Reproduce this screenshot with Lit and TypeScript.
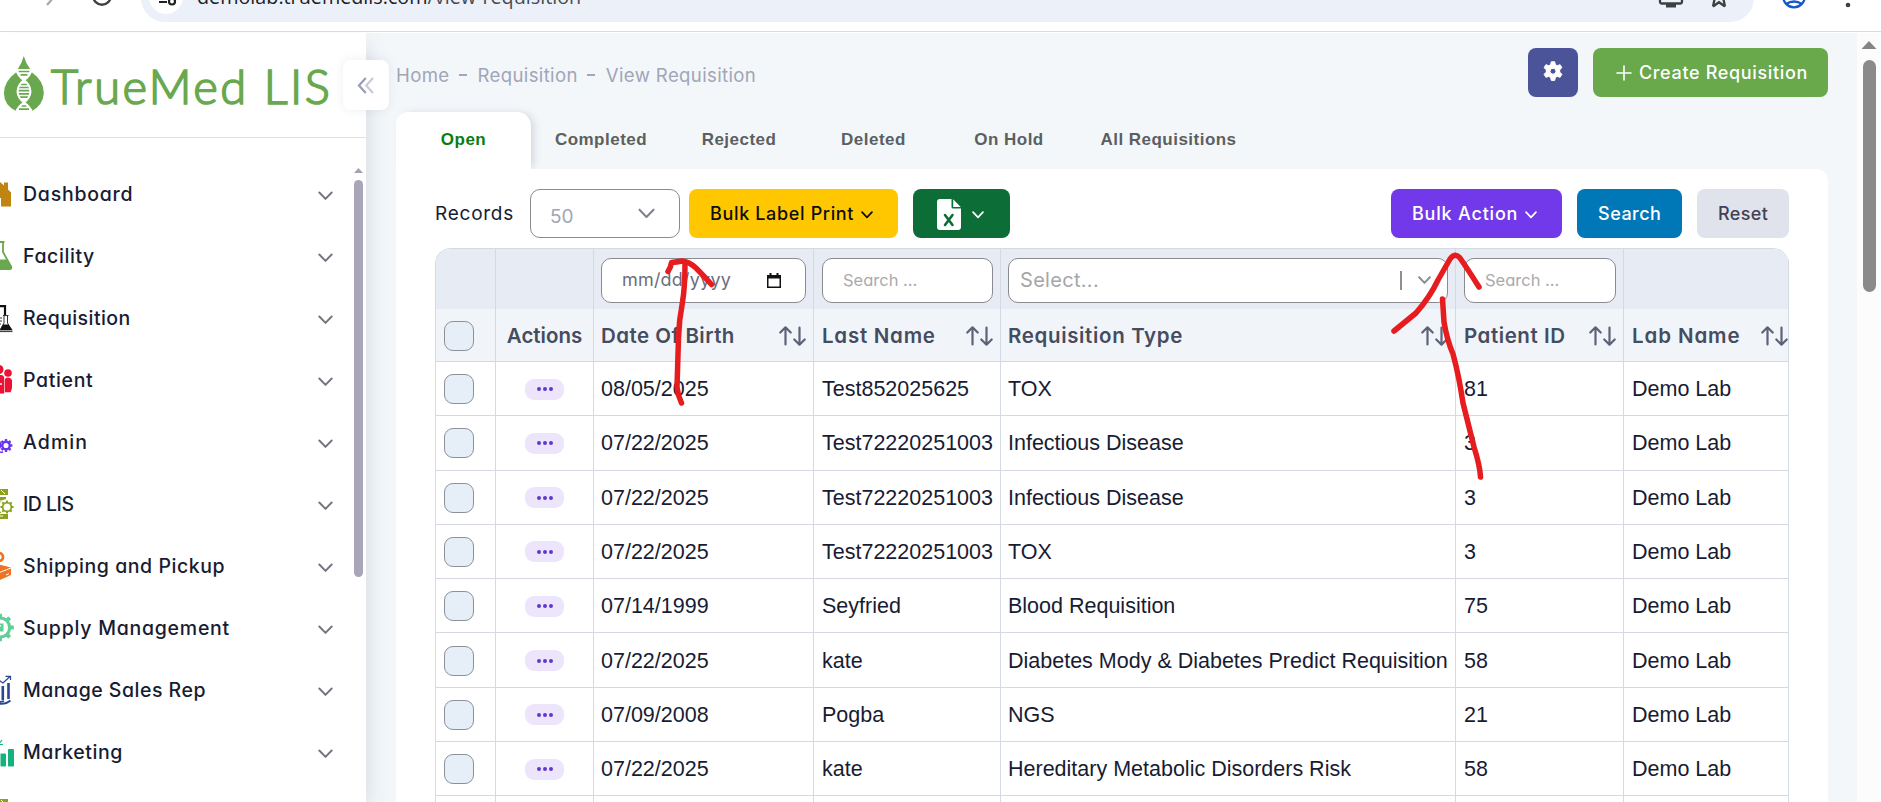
import { LitElement, html, css, svg } from 'lit';
import { customElement } from 'lit/decorators.js';

const chevron = (w = 14, sw = 2) => html`<svg class="chev" width=${w} height=${w * 0.64} viewBox="0 0 14 9" fill="none"
  stroke="currentColor" stroke-width=${sw} stroke-linecap="round" stroke-linejoin="round"><path d="M1.2 1.4 7 7.4l5.800-6"/></svg>`;

const teeth = (cx: number, cy: number, r: number, w: number, h: number, color: string) =>
  [0, 45, 90, 135, 180, 225, 270, 315].map(
    (a) => svg`<rect x=${cx - w / 2} y=${cy - r - h} width=${w} height=${h + 1} rx="0.6" fill=${color} transform="rotate(${a} ${cx} ${cy})"/>`
  );

const idLis = svg`<path fill="#8aa31f" d="M8 0h17v6H8zM8 8h15v16H8z"/><path stroke="#fff" stroke-width="1" d="M18 1l4 4M17 12h3M17 16h2"/>
  <circle cx="24" cy="18" r="8" fill="#fff"/><circle cx="24" cy="18" r="4.400" fill="none" stroke="#8aa31f" stroke-width="1.700"/>
  ${teeth(24, 18, 4.8, 2, 1.8, '#8aa31f')}<path fill="#8aa31f" d="M8 25h17v5H8z"/><path stroke="#fff" d="M8 27h12"/>`;

const NAV = [
  { label: 'Dashboard', track: 0.76, icon: svg`<path fill="#c08411" d="M2 15 16 2l5 4.500V3.400h4v7l3 3V27.500H18V19h-6v8.500H4V15z"/>` },
  { label: 'Facility', track: 0.6, icon: svg`<path fill="#6aa84f" d="M9 0h12.500v2H9z"/><path fill="none" stroke="#6aa84f" stroke-width="1.800" d="M11 1v9L2 26q0 2 2 2h22q3 0 2-2.500L20 11V1"/><path fill="#6aa84f" d="M6 18.500h18l5 7.500q.5 2.500-2 2.800H4z"/>` },
  { label: 'Requisition', track: 0.42, icon: svg`<path fill="none" stroke="#111" stroke-width="2.200" d="M12 3.200h10V12"/><path fill="none" stroke="#333" stroke-width="1" d="M15 15h4M15 18h4M15 21h3M20 12.500h5.500M21 13v7l-4 7M24.500 13v7l4 7"/><path fill="#111" d="M20 21.500h5.500l4 5.500H17z"/><path fill="#444" d="M12 27.500h17.500v1.600H12z"/>` },
  { label: 'Patient', track: 0.65, icon: svg`<g fill="#ee1133"><circle cx="16" cy="4.500" r="4.500"/><path d="M8 12q0-2 3-2h7q3 0 3.200 3v15.500H8z"/><circle cx="25" cy="8" r="3.800"/><path d="M21.800 15q.2-2.500 3.200-2.500t4 2.500v8l-1.300 4.200h-5.900z"/></g><path stroke="#fff" stroke-width="1.600" d="M13 19h6"/>` },
  { label: 'Admin', track: 1.1, icon: svg`<circle cx="23" cy="18.500" r="3.700" fill="none" stroke="#6a35ee" stroke-width="2.300"/>${teeth(23, 18.5, 4.4, 2.6, 2, '#6a35ee')}<circle cx="12" cy="18" r="5" fill="none" stroke="#6a35ee" stroke-width="3"/><path fill="none" stroke="#6a35ee" stroke-width="1.400" d="M16 24.500q2 1.500 4 .3"/>` },
  { label: 'ID LIS', track: -0.5, icon: idLis },
  { label: 'Shipping and Pickup', track: 0.55, icon: svg`<circle cx="16" cy="6" r="4" fill="none" stroke="#ee7322" stroke-width="2.800"/><path fill="#ee7322" d="M12 9h6l-2 5zM2 18l12-5 14 3.500V24l-13 6L2 25z"/><path fill="none" stroke="#fff" stroke-width="1" d="M15 22l13-5M23 24l3-1.300M14 21l3-2"/>` },
  { label: 'Supply Management', track: 0.75, icon: svg`<circle cx="17" cy="14.500" r="9.600" fill="none" stroke="#5fcf97" stroke-width="3"/>${teeth(17, 14.5, 10.6, 4, 3.2, '#5fcf97')}<path fill="#5fcf97" d="M12 10.500h8.500v8H12z"/><path fill="#fff" d="M15 12h3v1.500h-3z"/>` },
  { label: 'Manage Sales Rep', track: 0.5, icon: svg`<g fill="#2c4695"><path d="M18.500 11h2.600v14h-2.600zM24.200 8h2.600v16h-2.600zM12 15h3v10h-3z"/></g><path fill="none" stroke="#2c4695" stroke-width="1.200" d="M12 10.500 17 6l3 2 7-6.500M22.500 1.300H27.500V5"/><path fill="none" stroke="#2c4695" stroke-width="1.800" d="M12 27.500q9 3.500 15.500-2M12 25.500q4 2.500 9 .5"/>` },
  { label: 'Marketing', track: 0.55, icon: svg`<g fill="#14b27d"><rect x="17.500" y="16.500" width="5.500" height="13" rx="0.800"/><rect x="25" y="12" width="6" height="17.500" rx="0.800"/><rect x="10" y="20" width="5" height="9"/></g><path fill="none" stroke="#14b27d" stroke-width="1.200" d="M12 8q4-.5 7-5M15 7.500h5"/>` },
  { label: '', track: 0, icon: idLis },
];

const TABS = [
  { label: 'Open', w: 135 }, { label: 'Completed', w: 140 }, { label: 'Rejected', w: 136 },
  { label: 'Deleted', w: 133 }, { label: 'On Hold', w: 138 }, { label: 'All Requisitions', w: 181 },
];

const ROWS = [
  ['08/05/2025', 'Test852025625', 'TOX', '81'],
  ['07/22/2025', 'Test72220251003', 'Infectious Disease', '3'],
  ['07/22/2025', 'Test72220251003', 'Infectious Disease', '3'],
  ['07/22/2025', 'Test72220251003', 'TOX', '3'],
  ['07/14/1999', 'Seyfried', 'Blood Requisition', '75'],
  ['07/22/2025', 'kate', 'Diabetes Mody & Diabetes Predict Requisition', '58'],
  ['07/09/2008', 'Pogba', 'NGS', '21'],
  ['07/22/2025', 'kate', 'Hereditary Metabolic Disorders Risk', '58'],
];

const HEADS: [string, number][] = [
  ['Date Of Birth', 0.45], ['Last Name', 0.75], ['Requisition Type', 0.65], ['Patient ID', 0.55], ['Lab Name', 0.9],
];

@customElement('browser-bar')
class BrowserBar extends LitElement {
  static styles = css`
    :host { display: flex; box-sizing: border-box; height: 32px; border-bottom: 1px solid #dadcdd; background: #fff; overflow: hidden; }
    .nav { width: 141px; height: 31px; flex: none; }
    .pill { flex: 1; height: 44px; margin-top: -22px; box-sizing: border-box; border-radius: 0 0 24px 24px; background: #ebf0f9; display: flex; align-items: flex-start; }
    .site { width: 34px; height: 34px; margin: 2px 14px 0 8px; border-radius: 50%; background: #fff; flex: none; }
    .url { flex: 1; font: 400 19.75px/24px 'Open Sans', 'Noto Sans', sans-serif; color: #474b50; margin-top: 7px; white-space: nowrap; }
    .url b { font-weight: 400; color: #1d2024; }
    .tools { margin-top: 22px; width: 110px; height: 22px; }
    .end { width: 127px; height: 31px; flex: none; }
  `;
  render() {
    return html`
      <svg class="nav" viewBox="0 0 141 31" fill="none"><path d="M47 5 54-3" stroke="#a8a8a8" stroke-width="2.200"/><circle cx="102" cy="-4" r="8.800" stroke="#3c4043" stroke-width="2.400"/></svg>
      <div class="pill">
        <svg class="site" viewBox="0 0 34 34" fill="none" stroke="#1f2124" stroke-width="2.200"><path d="M10 22h8"/><circle cx="23" cy="21.500" r="3"/></svg>
        <div class="url"><b>demolab.truemedlis.com</b>/view-requisition</div>
        <svg class="tools" viewBox="0 0 110 22" fill="none" stroke="#3c4043" stroke-width="2.300">
          <path d="M16 -6V1.500q0 2 2 2h18q2 0 2-2V-6"/><path fill="#3c4043" stroke="none" d="M22 4h10v3.500H22z"/>
          <path d="M69 6.500 71-3M81 6.500 79-3M69 6.500 75 2.200 81 6.500"/>
        </svg>
      </div>
      <svg class="end" viewBox="0 0 127 31" fill="none"><circle cx="40" cy="-3.500" r="10.800" stroke="#1558c8" stroke-width="2.300"/><path d="M32 4q8-5 16 0" stroke="#1558c8" stroke-width="2.300"/><circle cx="94" cy="5" r="2.300" fill="#3c4043"/></svg>
    `;
  }
}

@customElement('side-bar')
class SideBar extends LitElement {
  static styles = css`
    :host { display: block; position: relative; width: 366px; height: 769px; background: #fff; box-shadow: 6px 8px 20px -4px rgba(60, 80, 100, .16); z-index: 2; }
    .brand { height: 104px; border-bottom: 1px solid #dfe3e8; display: flex; align-items: flex-start; }
    .brand svg { width: 40px; height: 56px; margin: 23px 0 0 4px; flex: none; }
    .name { font: 300 47px/56px Lato, sans-serif; color: #6aa84f; letter-spacing: 2.500px; margin: 25px 0 0 7px; white-space: nowrap; -webkit-text-stroke: 1.700px #6aa84f; }
    nav { height: 664px; padding-top: 25px; box-sizing: border-box; overflow: hidden; }
    .item { height: 62px; display: flex; align-items: center; padding-right: 33px; color: #181c32; }
    .item > svg:first-child { width: 31px; height: 30px; margin-left: -17px; flex: none; }
    .item .label { flex: 1; margin: -1px 0 0 9px; font: 500 19.500px/28px Inter, sans-serif; font-feature-settings: 'cv11'; white-space: nowrap; }
    .item .chev { color: #73757d; margin-top: 3px; }
    .toggle { position: absolute; left: 343px; top: 27px; width: 46px; height: 50px; border-radius: 8px; background: #fff; box-shadow: 0 0 10px rgba(60, 80, 120, .1); display: flex; align-items: center; justify-content: center; }
    .scroll { position: absolute; left: 354px; top: 135px; width: 9px; display: flex; flex-direction: column; gap: 7px; }
    .up { height: 5px; background: #a5a3b3; clip-path: polygon(50% 0, 100% 100%, 0 100%); }
    .thumb { height: 397px; border-radius: 5px; background: #a8a6b8; }
  `;
  render() {
    return html`
      <div class="brand">
        <svg viewBox="0 0 40 56">
          <path fill="#6aa84f" d="M19.800 0Q21.500 7 26.500 13.500L20 15 13.500 13.500Q18 7 19.800 0z"/>
          <path fill="#6aa84f" d="M12 16.500 28 16.500Q40 25 39.800 37.500 39 49 28 55 20 57.500 12 55 0 49 0 37.500 0 25 12 16.500z"/>
          <path fill="#fff" d="M12.500 13h15Q26 20 20 24 14 20 12.500 13zM20 24q6 5 6.500 12-.5 6-6.500 10.500Q13.500 42 13.500 36 14 29 20 24zM20 46.500q6 4 8 9.500H12q2-5.500 8-9.500z"/>
          <path fill="none" stroke="#6aa84f" stroke-width="1.700" d="M14.500 15.500h11M16.500 18.800h7M17 28.500h6M15 31.500h10M14.500 34.700h11M14.500 37.900h11M16 41.100h8M17.500 50h5M15 53.200h10"/>
          <path fill="none" stroke="#fff" stroke-width="2" d="M12.500 13q1 7 7.500 11 6.500 5 6.500 12-.5 6-6.500 10.500-6 4-8 9.500M27.500 13q-1 7-7.500 11-6.500 5-6.500 12 .5 6 6.500 10.500 6 4 8 9.500"/>
        </svg>
        <div class="name">TrueMed LIS</div>
      </div>
      <nav>
        ${NAV.map((n) => html`<div class="item"><svg viewBox="0 0 31 30">${n.icon}</svg>
          <span class="label" style="letter-spacing:${n.track}px">${n.label}</span>${chevron(15, 1.8)}</div>`)}
      </nav>
      <div class="toggle"><svg width="18" height="17" viewBox="0 0 18 17" fill="none" stroke-width="2.200"><path d="M8.800 1 2 8.500 8.800 16" stroke="#9a9cb4"/><path d="M16 1 9.200 8.500 16 16" stroke="#c9cad8"/></svg></div>
      <div class="scroll"><div class="up"></div><div class="thumb"></div></div>
    `;
  }
}

@customElement('requisition-grid')
class RequisitionGrid extends LitElement {
  static styles = css`
    :host { display: block; border: 1px solid #d3dae3; border-right: 0; border-bottom: 0; border-radius: 16px 16px 0 0; overflow: hidden; }
    .row { display: grid; grid-template-columns: 60px 98px 220px 187px 455px 168px 165px; height: 54.290px; }
    .row > div { box-sizing: border-box; border-right: 1px solid #d3dae3; border-bottom: 1px solid #d5d8e0; padding: 1px 7px 0; display: flex; align-items: center; min-width: 0; white-space: nowrap;
      font: 400 21.500px/26px 'Liberation Sans', Arial, sans-serif; color: #181c32; }
    .row > div:nth-child(4), .row > div:nth-child(6), .row > div:nth-child(7) { padding-left: 8px; }
    .filters { height: 60px; background: #e7ecf4; }
    .filters > div, .heads > div { border-right-color: #d3dae6; }
    .filters > div { border-bottom: 0; }
    .heads { height: 53px; background: #f1f5f9; }
    .heads > div { font: 600 20.500px/28px Inter, sans-serif; font-feature-settings: 'cv11'; color: #464c60; justify-content: space-between; overflow: hidden; }
    .heads > div span { padding-top: 1px; }
    .row.heads > div:last-child { padding-right: 0; }
    .heads > .mid, .row > .mid { justify-content: center; padding-left: 0; padding-right: 0; }
    .box { box-sizing: border-box; width: 30px; height: 30px; border: 1px solid #8d9299; border-radius: 9px; background: #e6eef7; margin-left: 1px; flex: none; }
    .badge { width: 39px; height: 21px; border-radius: 9px; background: #ece5fc; display: flex; align-items: center; justify-content: center; gap: 2px; }
    .badge i { width: 4px; height: 4px; border-radius: 50%; background: #6238cc; }
    .field { box-sizing: border-box; width: 100%; height: 45px; margin-top: 1px; border: 1px solid #8a8a90; border-radius: 10px; background: #fff; display: flex; align-items: center; padding: 0 20px;
      font: 400 16.500px/24px Inter, sans-serif; font-feature-settings: 'cv11'; letter-spacing: 0; color: #aaaaac; }
    .date { font-size: 18px; color: #6a6e80; letter-spacing: .2px; justify-content: space-between; padding-right: 24px; }
    .select { font-size: 20px; color: #a6a6a8; letter-spacing: .3px; padding: 0 16px 0 11px; }
    .select .bar { width: 2px; height: 19px; background: #8f8f92; margin: 0 16px 0 auto; }
    .select .chev { color: #8f8f92; }
  `;
  private sort = html`<svg width="27" height="20" viewBox="0 0 27 20" fill="none" stroke="#5e6278" stroke-width="2.200" stroke-linecap="round" stroke-linejoin="round"><path d="M6.500 18.500V1.500M1.300 6.500 6.500 1.300l5.200 5.200M20.500 1.500v17M15.300 13.500l5.200 5.200 5.200-5.200"/></svg>`;
  render() {
    return html`
      <div class="row filters">
        <div></div><div></div>
        <div><span class="field date">mm/dd/yyyy<svg width="14" height="15" viewBox="0 0 14 15"><path fill="#111" fill-rule="evenodd" d="M0 2h2.500V0h2v2h5V0h2v2H14v13H0zM1.500 5.500v8h11v-8z"/></svg></span></div>
        <div><span class="field">Search ...</span></div>
        <div><span class="field select">Select...<i class="bar"></i>${chevron(13, 2.2)}</span></div>
        <div><span class="field">Search ...</span></div>
        <div></div>
      </div>
      <div class="row heads">
        <div><i class="box"></i></div>
        <div class="mid"><span>Actions</span></div>
        ${HEADS.map(([h, t]) => html`<div><span style="letter-spacing:${t}px">${h}</span>${this.sort}</div>`)}
      </div>
      ${[...ROWS, ['', '', '', '']].map((r) => html`<div class="row">
        <div>${r[0] ? html`<i class="box"></i>` : ''}</div>
        <div class="mid">${r[0] ? html`<span class="badge"><i></i><i></i><i></i></span>` : ''}</div>
        ${r.map((c) => html`<div>${c}</div>`)}<div>${r[0] ? 'Demo Lab' : ''}</div></div>`)}
    `;
  }
}

@customElement('app-root')
class AppRoot extends LitElement {
  static styles = css`
    :host { display: block; position: relative; width: 1881px; height: 802px; overflow: hidden; background: #fff; font-family: Inter, sans-serif; font-feature-settings: 'cv11'; }
    .body { display: flex; height: 769px; padding-top: 1px; overflow: hidden; }
    main { flex: 1; background: #f3f7fa; padding: 15px 29px 0 30px; min-width: 0; }
    .top { display: flex; align-items: center; height: 49px; gap: 15px; }
    .crumbs { flex: 1; display: flex; align-items: center; font: 400 18.600px/26px Inter, sans-serif; letter-spacing: .35px; color: #a1a5b7; padding-top: 5px; }
    .crumbs i { width: 8px; height: 2px; background: #a1a5b7; margin: 0 10.500px 0 9.500px; }
    .btn { box-sizing: border-box; height: 49px; border-radius: 8px; display: flex; align-items: center; padding: 1px 0 0 21px; font: 500 18px/26px Inter, sans-serif; letter-spacing: .65px; color: #fff; white-space: nowrap; gap: 7px; }
    .gear { width: 50px; padding: 0 0 1px; justify-content: center; background: #4b5498; }
    .create { width: 235px; background: #69a84b; padding-left: 23px; gap: 7px; }
    .tabs { display: flex; height: 57px; margin-top: 15px; }
    .tab { display: flex; align-items: center; justify-content: center; padding-bottom: 2px; box-sizing: border-box; font: 700 17px/24px 'Liberation Sans', Arial, sans-serif; letter-spacing: .48px; color: #5c5f62; }
    .tab.on { color: #0b7d10; background: #fff; border-radius: 12px 14px 0 0; box-shadow: 4px 0 8px -2px rgba(70, 80, 90, .22); }
    .card { background: #fff; border-radius: 0 12px 0 0; padding: 20px 39px 0; height: 640px; position: relative; }
    .tools { display: flex; height: 49px; align-items: center; margin-bottom: 10px; }
    .records { width: 95px; font: 400 19px/26px Inter, sans-serif; letter-spacing: .75px; color: #181c32; }
    .count { box-sizing: border-box; width: 150px; height: 49px; border: 1px solid #8a8a90; border-radius: 10px; display: flex; align-items: center; justify-content: space-between; padding: 0 24px 0 19px; font: 400 19px/26px Inter, sans-serif; color: #a1a5b7; }
    .count span { margin-top: 7px; }
    .count .chev { color: #80838f; }
    .label { width: 209px; margin: 0 15px 0 9px; background: #ffc700; color: #0d0d0d; }
    .excel { width: 97px; background: #0c6e36; padding-left: 24px; gap: 11px; }
    .btn .chev { margin-top: 2px; }
    .bulk { width: 171px; margin-left: auto; background: #7239ea; letter-spacing: .8px; }
    .search { width: 105px; margin: 0 15px; background: #0077b6; letter-spacing: .5px; }
    .reset { width: 92px; background: #e1e3ec; color: #3f4254; letter-spacing: .35px; }
    .scroll { width: 24px; background: #fcfcfc; display: flex; flex-direction: column; align-items: center; padding-top: 8px; box-sizing: border-box; }
    .up { width: 15px; height: 8px; background: #858585; clip-path: polygon(50% 0, 100% 100%, 0 100%); }
    .thumb { width: 13px; height: 232px; margin-top: 11px; border-radius: 7px; background: #8a8a8a; }
    .ink { position: absolute; left: 0; top: 0; z-index: 5; pointer-events: none; }
  `;
  render() {
    return html`
      <browser-bar></browser-bar>
      <div class="body">
        <side-bar></side-bar>
        <main>
          <div class="top">
            <div class="crumbs">Home<i></i>Requisition<i></i>View Requisition</div>
            <div class="btn gear"><svg width="20" height="22" viewBox="0 0 20 22"><path fill="#fff" fill-rule="evenodd" d="M8.300 0.800h3.400l.7 2.900 1.800 1 2.900-1 1.800 3-2.200 2.100v2.300l2.200 2.200-1.800 3-2.900-.9-1.800 1-.7 3h-3.400l-.7-3-1.800-1-2.900.9-1.800-3 2.200-2.200V8.800L1.100 6.700l1.800-3 2.900 1 1.800-1zM10 7.200a3 3 0 1 0 0 6 3 3 0 0 0 0-6z" stroke="#fff" stroke-width="1" stroke-linejoin="round"/></svg></div>
            <div class="btn create"><svg width="16" height="16" viewBox="0 0 16 16" stroke="#fff" stroke-width="1.600" stroke-linecap="round"><path d="M8 1v14M1 8h14"/></svg>Create Requisition</div>
          </div>
          <div class="tabs">${TABS.map((t, i) => html`<div class="tab ${i ? '' : 'on'}" style="width:${t.w}px">${t.label}</div>`)}</div>
          <div class="card">
            <div class="tools">
              <span class="records">Records</span>
              <div class="count"><span>50</span>${chevron(17, 1.7)}</div>
              <div class="btn label">Bulk Label Print ${chevron(12, 2)}</div>
              <div class="btn excel"><svg width="24" height="31" viewBox="0 0 24 31"><path fill="#fff" d="M3 0h11.500v8q0 1.500 1.500 1.500h8V28q0 3-3 3H3q-3 0-3-3V3q0-3 3-3zM16.200.3 23.700 8H16.200z"/><path stroke="#0c6e36" stroke-width="2.600" stroke-linecap="round" d="M8 16l7.500 10M15.500 16 8 26"/></svg>${chevron(12, 2)}</div>
              <div class="btn bulk">Bulk Action ${chevron(12, 2)}</div>
              <div class="btn search">Search</div>
              <div class="btn reset">Reset</div>
            </div>
            <requisition-grid></requisition-grid>
          </div>
        </main>
        <div class="scroll"><div class="up"></div><div class="thumb"></div></div>
      </div>
      <svg class="ink" width="1881" height="802" viewBox="0 0 1881 802" fill="none" stroke="#e61c1e" stroke-width="5.500" stroke-linecap="round" stroke-linejoin="round">
        <path d="M668 271.500Q671 267 671.500 262.500 677 262 682 261 689 261.500 696 268 703 275 711.500 284.500"/>
        <path d="M685 264Q685 287 682.500 302 679 320 678.500 338L677 387Q678 396 681.500 403"/>
        <path d="M1394 331 1416 313Q1430 297 1438 280L1450 259Q1455 252 1460 258 1467 268 1479 287"/>
        <path d="M1442.500 299 1444 322Q1447 340 1453 354 1459 376 1463 403L1474 447Q1480 466 1480.500 477"/>
      </svg>
    `;
  }
}
